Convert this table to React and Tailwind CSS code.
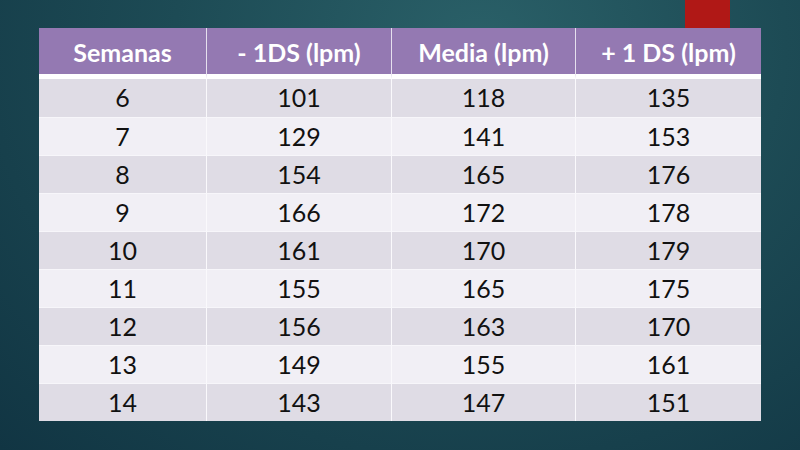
import React from "react";

const rows = [
  [6, 101, 118, 135],
  [7, 129, 141, 153],
  [8, 154, 165, 176],
  [9, 166, 172, 178],
  [10, 161, 170, 179],
  [11, 155, 165, 175],
  [12, 156, 163, 170],
  [13, 149, 155, 161],
  [14, 143, 147, 151],
];

const headers = ["Semanas", "- 1DS (lpm)", "Media (lpm)", "+ 1 DS (lpm)"];

export default function App() {
  return (
    <div
      className="relative w-[800px] h-[450px] overflow-hidden bg-[radial-gradient(ellipse_at_60%_10%,#2a6068_0%,#1d4b55_45%,#113543_100%)] pt-[28px] pl-[39px]"
      style={{ fontFamily: "Lato, 'Open Sans', sans-serif" }}
    >
      {/* marca roja arriba */}
      <div className="absolute top-0 left-[685px] w-[45px] h-[28px] bg-[#b01816]" />

      <div className="w-[722px] grid grid-cols-[167px_185px_184px_186px]">
        {headers.map((h, i) => (
          <div
            key={h}
            className={`h-[51px] pt-[3px] border-b-[5px] border-white bg-[#9479b2] bg-clip-padding flex items-center justify-center text-white font-bold text-[25px] ${i > 0 ? "border-l border-l-[#e6e0ee]" : ""}`}
          >
            {h}
          </div>
        ))}

        {rows.map((r, ri) =>
          r.map((v, ci) => (
            <div
              key={ri + "-" + ci}
              className={`h-[38px] flex items-center justify-center text-[25px] text-[#111] ${ri % 2 === 0 ? "bg-[#dfdce5]" : "bg-[#f1eff5]"} ${ri > 0 ? "border-t border-t-[#f7f6fa]" : ""} ${ci > 0 ? "border-l border-l-[#faf9fc]" : ""}`}
            >
              {v}
            </div>
          ))
        )}
      </div>
    </div>
  );
}
